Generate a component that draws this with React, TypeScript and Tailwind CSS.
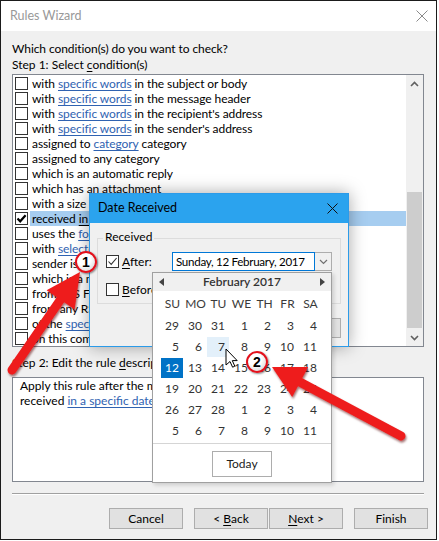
import React from "react";

type Seg = { t: string; l?: boolean };
const S = (t: string): Seg => ({ t });
const L = (t: string): Seg => ({ t, l: true });

const rows: Seg[][] = [
  [S("with "), L("specific words"), S(" in the subject or body")],
  [S("with "), L("specific words"), S(" in the message header")],
  [S("with "), L("specific words"), S(" in the recipient's address")],
  [S("with "), L("specific words"), S(" in the sender's address")],
  [S("assigned to "), L("category"), S(" category")],
  [S("assigned to any category")],
  [S("which is an automatic reply")],
  [S("which has an attachment")],
  [S("with a size "), L("in a specific range")],
  [S("received "), L("in a specific date span")],
  [S("uses the "), L("form name"), S(" form")],
  [S("with "), L("selected properties"), S(" of documents or forms")],
  [S("sender is "), L("in specified Address Book")],
  [S("which is a meeting invitation or update")],
  [S("from RSS Feeds with "), L("specified text"), S(" in the title")],
  [S("from any RSS Feed")],
  [S("of the "), L("specific form"), S(" type")],
  [S("on this computer only")],
];

const weeks = [
  [29, 30, 31, 1, 2, 3, 4],
  [5, 6, 7, 8, 9, 10, 11],
  [12, 13, 14, 15, 16, 17, 18],
  [19, 20, 21, 22, 23, 24, 25],
  [26, 27, 28, 1, 2, 3, 4],
  [5, 6, 7, 8, 9, 10, 11],
];
const dayNames = ["SU", "MO", "TU", "WE", "TH", "FR", "SA"];

function Box({ checked, thin }: { checked?: boolean; thin?: boolean }) {
  return (
    <div className="w-[13px] h-[13px] shrink-0 border border-[#333333] bg-white flex items-center justify-center">
      {checked && !thin && (
        <svg width="11" height="11" viewBox="0 0 11 11">
          <path d="M1.5 5.5 L4.2 8.3 L9.6 2.2" fill="none" stroke="#000" strokeWidth="2.2" />
        </svg>
      )}
      {checked && thin && (
        <svg width="11" height="11" viewBox="0 0 11 11">
          <path d="M1.5 5.5 L4.2 8.4 L9.6 2" fill="none" stroke="#333" strokeWidth="1.1" />
        </svg>
      )}
    </div>
  );
}

function Btn({ children, w = "w-[74px]" }: { children: React.ReactNode; w?: string }) {
  return (
    <div className={`${w} h-[21px] border border-[#adadad] bg-[#e1e1e1] flex items-center justify-center leading-[14px]`}>
      {children}
    </div>
  );
}

export default function App() {
  return (
    <div className="relative w-[439px] h-[541px] bg-white overflow-hidden font-['Lato','Noto_Sans',sans-serif] text-[12px] text-black">
      <div className="w-[437px] h-[540px] border border-[#1b1b1b] flex flex-col bg-[#f0f0f0]">
        {/* title bar */}
        <div className="h-[30px] shrink-0 bg-white flex items-center justify-between pl-[9px] pr-[8px]">
          <span className="text-[#999999] text-[12.5px]">Rules Wizard</span>
          <svg width="12" height="12" viewBox="0 0 12 12">
            <path d="M0.5 0.5 L11.5 11.5 M11.5 0.5 L0.5 11.5" stroke="#8a8a8a" strokeWidth="1" />
          </svg>
        </div>

        <div className="flex flex-col pl-[11px] pr-[12px] pt-[10px]">
          <div className="leading-[16px] tracking-[-0.08px]">Which condition(s) do you want to check?</div>
          <div className="leading-[16px]">
            Step 1: Select <span className="underline underline-offset-[2px]">c</span>ondition(s)
          </div>

          {/* list box */}
          <div className="mt-[1px] h-[273px] border border-[#828790] bg-white flex overflow-hidden">
            <div className="flex-1 flex flex-col pt-[1px] tracking-[-0.08px]">
              {rows.map((segs, i) => {
                const sel = i === 9;
                return (
                  <div key={i} className="h-[15px] shrink-0 flex items-center pl-[2px]">
                    <Box checked={sel} />
                    <div
                      className={`ml-[2px] flex-1 h-[15px] pl-[2px] flex items-center whitespace-nowrap leading-[15px] ${
                        sel ? "bg-[#a6cdf0]" : ""
                      }`}
                    >
                      {segs.map((s, j) =>
                        s.l ? (
                          <span
                            key={j}
                            className={`underline underline-offset-[2px] whitespace-pre ${
                              sel ? "text-black" : "text-[#2f62b1]"
                            }`}
                          >
                            {s.t}
                          </span>
                        ) : (
                          <span key={j} className="whitespace-pre">
                            {s.t}
                          </span>
                        )
                      )}
                    </div>
                  </div>
                );
              })}
            </div>
            {/* scrollbar */}
            <div className="w-[17px] shrink-0 bg-[#f0f0f0] flex flex-col items-center">
              <div className="h-[17px] flex items-center justify-center">
                <svg width="9" height="6" viewBox="0 0 9 6">
                  <path d="M1 5 L4.5 1.5 L8 5" fill="none" stroke="#606060" strokeWidth="1.6" />
                </svg>
              </div>
              <div className="h-[100px]" />
              <div className="w-[15px] h-[136px] bg-[#cdcdcd]" />
              <div className="flex-1" />
              <div className="h-[17px] flex items-center justify-center">
                <svg width="9" height="6" viewBox="0 0 9 6">
                  <path d="M1 1 L4.5 4.5 L8 1" fill="none" stroke="#606060" strokeWidth="1.6" />
                </svg>
              </div>
            </div>
          </div>

          <div className="mt-[8px] leading-[16px] whitespace-nowrap">
            Step 2: Edit the rule <span className="underline underline-offset-[2px]">d</span>escription (click an
            underlined value)
          </div>

          <div className="mt-[6px] h-[105px] border border-[#828790] bg-white pl-[7px] leading-[15px]">
            <div>Apply this rule after the message arrives</div>
            <div>
              received{" "}
              <span className="text-[#2f62b1] underline underline-offset-[2px]">in a specific date span</span>
            </div>
          </div>

          <div className="mt-[11px] border-t border-t-[#a0a0a0] border-b border-b-white" />
        </div>

        <div className="mt-[13px] flex pl-[108px]">
          <Btn>Cancel</Btn>
          <div className="w-[11px]" />
          <Btn>
            &lt; <span className="underline underline-offset-[2px] ml-[3px]">B</span>ack
          </Btn>
          <div className="w-[1px]" />
          <Btn>
            <span className="underline underline-offset-[2px]">N</span>ext &gt;
          </Btn>
          <div className="w-[11px]" />
          <Btn>Finish</Btn>
        </div>
      </div>

      {/* Date Received dialog */}
      <div className="absolute left-[89px] top-[193px] w-[260px] h-[154px] border border-[#2b9be9] bg-[#f0f0f0] shadow-[0_0_16px_rgba(0,0,0,0.35)] flex flex-col">
        <div className="h-[29px] shrink-0 bg-[#2ba3ee] flex items-center justify-between pl-[8px] pr-[10px]">
          <span className="text-[12.5px] text-black">Date Received</span>
          <svg width="11" height="11" viewBox="0 0 11 11">
            <path d="M0.5 0.5 L10.5 10.5 M10.5 0.5 L0.5 10.5" stroke="#111" strokeWidth="1" />
          </svg>
        </div>
        <div className="flex flex-col px-[7px] pt-[15px]">
          <div className="relative h-[66px] border border-[#dcdcdc] pt-[13px] pl-[8px]">
            <span className="absolute -top-[9px] left-[5px] px-[2px] bg-[#f0f0f0] leading-[14px]">Received</span>
            <div className="flex items-center h-[19px]">
              <div className="w-[66px] flex items-center">
                <Box checked thin />
                <span className="ml-[3px]">
                  <span className="underline underline-offset-[2px]">A</span>fter:
                </span>
              </div>
              <div className="flex h-[19px]">
                <div className="w-[143px] border border-[#0078d7] bg-white flex items-center pl-[3px] whitespace-nowrap overflow-hidden text-[11.6px] tracking-[-0.3px]">
                  Sunday, 12 February, 2017
                </div>
                <div className="w-[17px] border border-[#adadad] border-l-0 bg-[#f0f0f0] flex items-center justify-center">
                  <svg width="9" height="6" viewBox="0 0 9 6">
                    <path d="M1 1 L4.5 4.5 L8 1" fill="none" stroke="#707070" strokeWidth="1.2" />
                  </svg>
                </div>
              </div>
            </div>
            <div className="flex items-center h-[19px] mt-[9px]">
              <Box />
              <span className="ml-[3px]">
                <span className="underline underline-offset-[2px]">B</span>efore:
              </span>
            </div>
          </div>
          <div className="self-end mt-[14px] w-[75px] h-[20px] border border-[#adadad] bg-[#e1e1e1] flex items-center justify-center">
            OK
          </div>
        </div>
      </div>

      {/* Calendar popup */}
      <div className="absolute left-[152px] top-[272px] w-[180px] h-[211px] border border-[#a0a0a0] bg-white flex flex-col shadow-[2px_2px_4px_rgba(0,0,0,0.15)]">
        <div className="h-[18px] shrink-0 bg-[#f0f0f0] flex items-center justify-between px-[6px]">
          <svg width="5" height="8" viewBox="0 0 5 8">
            <path d="M5 0 L0 4 L5 8 Z" fill="#444" />
          </svg>
          <span className="font-semibold text-[#333333] leading-[14px]">February 2017</span>
          <svg width="5" height="8" viewBox="0 0 5 8">
            <path d="M0 0 L5 4 L0 8 Z" fill="#444" />
          </svg>
        </div>
        <div className="ml-[8px] w-[161px] mt-[2px] h-[22px] grid grid-cols-7 items-center">
          {dayNames.map((d) => (
            <div key={d} className="text-center text-[#3b3b3b]">
              {d}
            </div>
          ))}
        </div>
        <div className="ml-[8px] w-[161px] mt-[1px] grid grid-cols-7">
          {weeks.map((w, ri) =>
            w.map((n, ci) => {
              const sel = ri === 2 && ci === 0;
              const hov = ri === 1 && ci === 2;
              return (
                <div key={`${ri}-${ci}`} className="h-[21px]">
                  <div
                    className={`w-[22px] h-[20px] flex items-center justify-end pr-[4px] ${
                      sel ? "bg-[#0072c6] text-white" : hov ? "bg-[#e3f0fa] text-[#333333]" : "text-[#333333]"
                    }`}
                  >
                    {n}
                  </div>
                </div>
              );
            })
          )}
        </div>
        <div className="mt-[1px] border-t border-t-[#d5d5d5]" />
        <div className="mt-[7px] mx-auto w-[60px] h-[26px] border border-[#adadad] bg-white flex items-center justify-center text-[#222]">
          Today
        </div>
      </div>

      {/* mouse cursor */}
      <svg className="absolute left-[225px] top-[348px]" width="14" height="21" viewBox="0 0 14 21">
        <path
          d="M1 1 L1 17 L5 13.5 L7.6 19.2 L9.8 18.2 L7.3 12.6 L12.2 12.6 Z"
          fill="#fff"
          stroke="#000"
          strokeWidth="1"
          strokeLinejoin="round"
        />
      </svg>

      {/* red arrows */}
      <svg className="absolute left-0 top-0 pointer-events-none" width="439" height="541" viewBox="0 0 439 541">
        <defs>
          <filter id="sh" x="-20%" y="-20%" width="140%" height="140%">
            <feDropShadow dx="1" dy="2" stdDeviation="1.2" floodColor="#5a0000" floodOpacity="0.55" />
          </filter>
        </defs>
        <g filter="url(#sh)" fill="#ee1c1c" stroke="none">
          <line x1="12" y1="370" x2="63" y2="296" stroke="#ee1c1c" strokeWidth="9" strokeLinecap="round" />
          <polygon points="80,272 74.6,309.6 46.6,290.2" />
          <line x1="401" y1="436" x2="297" y2="380.5" stroke="#ee1c1c" strokeWidth="9" strokeLinecap="round" />
          <polygon points="272,367 308.2,367.1 292.2,397.1" />
        </g>
      </svg>

      {/* badges */}
      <div className="absolute left-[75px] top-[251px] w-[22px] h-[22px] rounded-full border-2 border-[#e3101b] bg-[radial-gradient(circle_at_40%_35%,#ffffff_0%,#ffffff_40%,#c9c9c9_100%)] shadow-[1px_1px_2px_rgba(0,0,0,0.45)] flex items-center justify-center font-['Liberation_Sans',sans-serif] font-bold text-[14px] leading-[14px] text-black">
        1
      </div>
      <div className="absolute left-[246px] top-[351px] w-[22px] h-[22px] rounded-full border-2 border-[#e3101b] bg-[radial-gradient(circle_at_40%_35%,#ffffff_0%,#ffffff_40%,#c9c9c9_100%)] shadow-[1px_1px_2px_rgba(0,0,0,0.45)] flex items-center justify-center font-['Liberation_Sans',sans-serif] font-bold text-[14px] leading-[14px] text-black">
        2
      </div>
    </div>
  );
}
